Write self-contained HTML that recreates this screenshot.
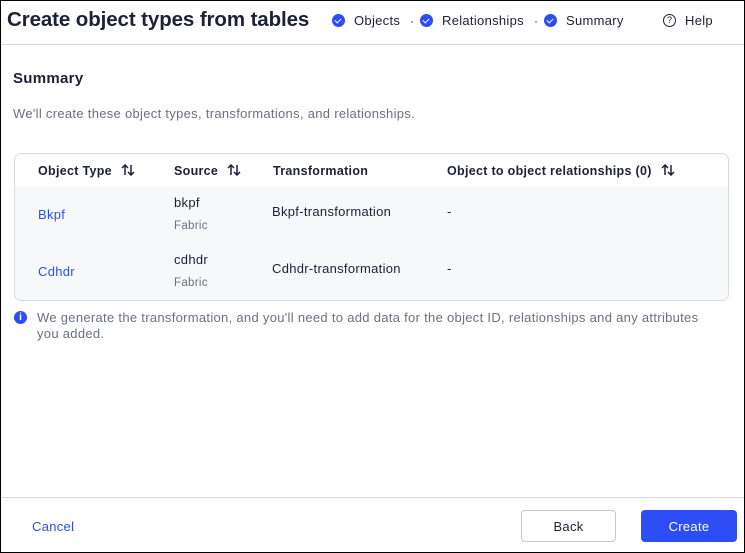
<!DOCTYPE html>
<html><head><style>
*{box-sizing:border-box;margin:0;padding:0}
body{width:745px;height:553px;font-family:"Liberation Sans",sans-serif;background:#fff;color:#1c2136;position:relative;overflow:hidden;letter-spacing:0.3px}
.frame{position:absolute;left:0;top:0;width:745px;height:553px;border:1px solid #000}
.hdr{position:absolute;left:1px;top:1px;width:743px;height:44px;border-bottom:1px solid #d4d6dd}
.title{position:absolute;left:6px;top:7px;font-size:20.5px;font-weight:bold;color:#1c2136;letter-spacing:-0.1px}
.step{position:absolute;top:12px;font-size:13px;color:#1c2136;display:flex;align-items:center}
.ck{width:13px;height:13px;border-radius:50%;background:#2d4ef5;display:inline-block;margin-right:9px;position:relative}
.ck:after{content:"";position:absolute;left:4px;top:3px;width:3px;height:5px;border:solid #fff;border-width:0 1.5px 1.5px 0;transform:rotate(45deg)}
.dot{position:absolute;top:20px;width:2px;height:2px;background:#8a8fa3;border-radius:50%}
h2{position:absolute;left:13px;top:70px;font-size:15px;font-weight:bold}
.desc{position:absolute;left:13px;top:106px;font-size:13px;color:#6b7083}
.tbl{position:absolute;left:14px;top:153px;width:715px;height:148px;border:1px solid #d9dbe1;border-radius:7px;overflow:hidden;background:#f7f8fa}
.th{position:absolute;top:9px;font-size:12.5px;font-weight:bold;line-height:16px}
.ar{display:inline-block;margin-left:9px;vertical-align:-1px}
.hrow{position:absolute;left:0;top:0;width:100%;height:32px;background:#fff}
.c{position:absolute;font-size:13px}
.link{color:#2d4ef5}
.sub{color:#6b7083;font-size:11.5px}
.info{position:absolute;left:14px;top:311px;width:13px;height:13px;border-radius:50%;background:#2d4ef5;color:#fff;font-size:10px;font-weight:bold;text-align:center;line-height:13px;letter-spacing:0}
.note{position:absolute;left:37px;top:310px;width:680px;font-size:13px;color:#6b7083;line-height:16px}
.ftr{position:absolute;left:1px;top:497px;width:743px;border-top:1px solid #d4d6dd}
.cancel{position:absolute;left:32px;top:519px;font-size:13px;color:#2d4ef5}
.btn{position:absolute;top:510px;height:32px;border-radius:4px;font-size:13px;text-align:center;line-height:32px}
</style></head><body>
<div class="hdr">
<div class="title">Create object types from tables</div>
<div class="step" style="left:331px"><span class="ck"></span>Objects</div>
<div class="dot" style="left:410px"></div>
<div class="step" style="left:419px"><span class="ck"></span>Relationships</div>
<div class="dot" style="left:534px"></div>
<div class="step" style="left:543px"><span class="ck"></span>Summary</div>
<div class="step" style="left:662px"><span style="display:inline-block;width:13px;height:13px;border:1.3px solid #1c2136;border-radius:50%;font-size:9px;text-align:center;line-height:11px;margin-right:9px;letter-spacing:0">?</span>Help</div>
</div>
<h2>Summary</h2>
<div class="desc">We'll create these object types, transformations, and relationships.</div>
<div class="tbl">
<div class="hrow"></div>
<div class="th" style="left:23px">Object Type<svg class="ar" width="14" height="12" viewBox="0 0 14 12" fill="none" stroke="#1c2136" stroke-width="1.5"><path d="M4 11V1M1 4l3-3 3 3M10 1v10M7 8l3 3 3-3"/></svg></div>
<div class="th" style="left:159px">Source<svg class="ar" width="14" height="12" viewBox="0 0 14 12" fill="none" stroke="#1c2136" stroke-width="1.5"><path d="M4 11V1M1 4l3-3 3 3M10 1v10M7 8l3 3 3-3"/></svg></div>
<div class="th" style="left:258px">Transformation</div>
<div class="th" style="left:432px">Object to object relationships (0)<svg class="ar" width="14" height="12" viewBox="0 0 14 12" fill="none" stroke="#1c2136" stroke-width="1.5"><path d="M4 11V1M1 4l3-3 3 3M10 1v10M7 8l3 3 3-3"/></svg></div>
<div class="c link" style="left:23px;top:53px">Bkpf</div>
<div class="c" style="left:159px;top:41px">bkpf</div>
<div class="c sub" style="left:159px;top:66px">Fabric</div>
<div class="c" style="left:257px;top:50px">Bkpf-transformation</div>
<div class="c" style="left:432px;top:50px">-</div>
<div class="c link" style="left:23px;top:110px">Cdhdr</div>
<div class="c" style="left:159px;top:98px">cdhdr</div>
<div class="c sub" style="left:159px;top:123px">Fabric</div>
<div class="c" style="left:257px;top:107px">Cdhdr-transformation</div>
<div class="c" style="left:432px;top:107px">-</div>
</div>
<div class="info">i</div>
<div class="note">We generate the transformation, and you'll need to add data for the object ID, relationships and any attributes you added.</div>
<div class="ftr"></div>
<div class="cancel">Cancel</div>
<div class="btn" style="left:521px;width:95px;border:1px solid #c5c8d2;color:#1c2136">Back</div>
<div class="btn" style="left:641px;width:96px;background:#2d4ef5;color:#fff;line-height:33px">Create</div>
<div class="frame"></div>
</body></html>
